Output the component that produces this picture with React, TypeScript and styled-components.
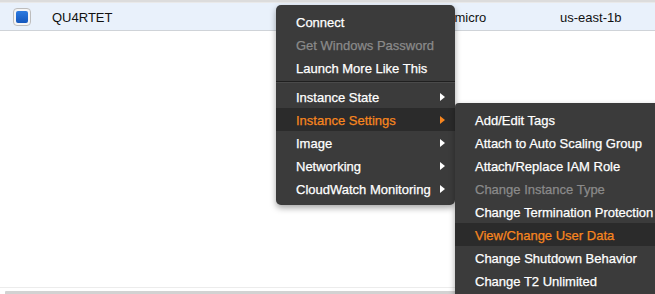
import React from "react";
import styled, { createGlobalStyle } from "styled-components";

const Global = createGlobalStyle`
  html, body { margin: 0; padding: 0; background: #fff; overflow: hidden; }
  body { font-family: "Liberation Sans", Arial, Helvetica, sans-serif; font-size: 13px; color: #111; }
`;

const Page = styled.div`
  position: relative;
  width: 655px;
  height: 294px;
  overflow: hidden;
  display: flex;
  flex-direction: column;
`;

const TopEdge = styled.div`
  height: 2px;
  background: #dcdcdc;
  border-bottom: 1px solid #e9e9e9;
`;

const Row = styled.div`
  display: grid;
  grid-template-columns: 44px 388px 120px 1fr;
  align-items: center;
  height: 27px;
  background: #e9f1fb;
  border-bottom: 1px solid #cfd3d8;
`;

const Cell = styled.div`
  padding: 1px 0 0 8px;
  white-space: nowrap;
  font-size: 13px;
  color: #111;
`;

const CheckCell = styled.div`
  display: flex;
  justify-content: center;
`;

const CheckBox = styled.div`
  width: 18px;
  height: 18px;
  box-sizing: border-box;
  border: 1px solid #bdbdbd;
  border-radius: 4px;
  background: #f5f5f5;
  display: flex;
  align-items: center;
  justify-content: center;
`;

const CheckFill = styled.div`
  width: 12px;
  height: 12px;
  border-radius: 2px;
  background: linear-gradient(#2d7be0, #1457bd);
`;

const Spacer = styled.div`
  flex: 1;
`;

const Footer = styled.div`
  border-top: 1px solid #ececec;
  padding: 3px 0 0 5px;
  margin-bottom: -1px;
`;

const ScrollBar = styled.div`
  height: 4px;
  background: #d2d2d2;
  border-radius: 1px 0 0 0;
`;

const Menu = styled.div<{ $left: number; $top: number; $width: number }>`
  position: absolute;
  left: ${(p) => p.$left}px;
  top: ${(p) => p.$top}px;
  width: ${(p) => p.$width}px;
  background: #3b3b3b;
  border-radius: 5px;
  padding: 5px 0;
  box-shadow: 0 3px 6px rgba(0, 0, 0, 0.35);
  z-index: 1;
`;

const SubMenu = styled(Menu)`
  border-radius: 4px 0 0 4px;
  z-index: 2;
`;

const Item = styled.div<{ $state?: "active" | "disabled"; $pad: number }>`
  height: 21px;
  display: flex;
  align-items: center;
  justify-content: space-between;
  padding: 2px 10px 0 ${(p) => p.$pad}px;
  white-space: nowrap;
  font-size: 13px;
  -webkit-text-stroke: 0.25px currentColor;
  color: ${(p) =>
    p.$state === "active" ? "#f7861f" : p.$state === "disabled" ? "#8a8a8a" : "#ffffff"};
  background: ${(p) => (p.$state === "active" ? "#2b2b2b" : "transparent")};
`;

const Separator = styled.div`
  height: 6px;
  display: flex;
  flex-direction: column;
  justify-content: center;
  &::before {
    content: "";
    display: block;
    height: 1px;
    background: #1f1f1f;
  }
  &::after {
    content: "";
    display: block;
    height: 1px;
    background: #4a4a4a;
  }
`;

const ArrowIcon = styled.svg`
  margin-top: -2px;
`;

const Arrow = ({ color }: { color: string }) => (
  <ArrowIcon width="5" height="8" viewBox="0 0 5 8">
    <path d="M0 0 L5 4 L0 8 Z" fill={color} />
  </ArrowIcon>
);

type Entry = { label: string; state?: "active" | "disabled"; sub?: boolean } | "sep";

const mainItems: Entry[] = [
  { label: "Connect" },
  { label: "Get Windows Password", state: "disabled" },
  { label: "Launch More Like This" },
  "sep",
  { label: "Instance State", sub: true },
  { label: "Instance Settings", sub: true, state: "active" },
  { label: "Image", sub: true },
  { label: "Networking", sub: true },
  { label: "CloudWatch Monitoring", sub: true },
];

const subItems: Entry[] = [
  { label: "Add/Edit Tags" },
  { label: "Attach to Auto Scaling Group" },
  { label: "Attach/Replace IAM Role" },
  { label: "Change Instance Type", state: "disabled" },
  { label: "Change Termination Protection" },
  { label: "View/Change User Data", state: "active" },
  { label: "Change Shutdown Behavior" },
  { label: "Change T2 Unlimited" },
];

const renderItems = (items: Entry[], pad: number) =>
  items.map((it, i) =>
    it === "sep" ? (
      <Separator key={i} />
    ) : (
      <Item key={i} $state={it.state} $pad={pad}>
        <span>{it.label}</span>
        {it.sub && <Arrow color={it.state === "active" ? "#f7861f" : "#ffffff"} />}
      </Item>
    )
  );

export default function App() {
  return (
    <>
      <Global />
      <Page>
        <TopEdge />
        <Row>
          <CheckCell>
            <CheckBox>
              <CheckFill />
            </CheckBox>
          </CheckCell>
          <Cell>QU4RTET</Cell>
          <Cell>t2.micro</Cell>
          <Cell>us-east-1b</Cell>
        </Row>
        <Spacer />
        <Footer>
          <ScrollBar />
        </Footer>
        <Menu $left={276} $top={5} $width={179}>
          {renderItems(mainItems, 20)}
        </Menu>
        <SubMenu $left={455} $top={103} $width={230}>
          {renderItems(subItems, 20)}
        </SubMenu>
      </Page>
    </>
  );
}
